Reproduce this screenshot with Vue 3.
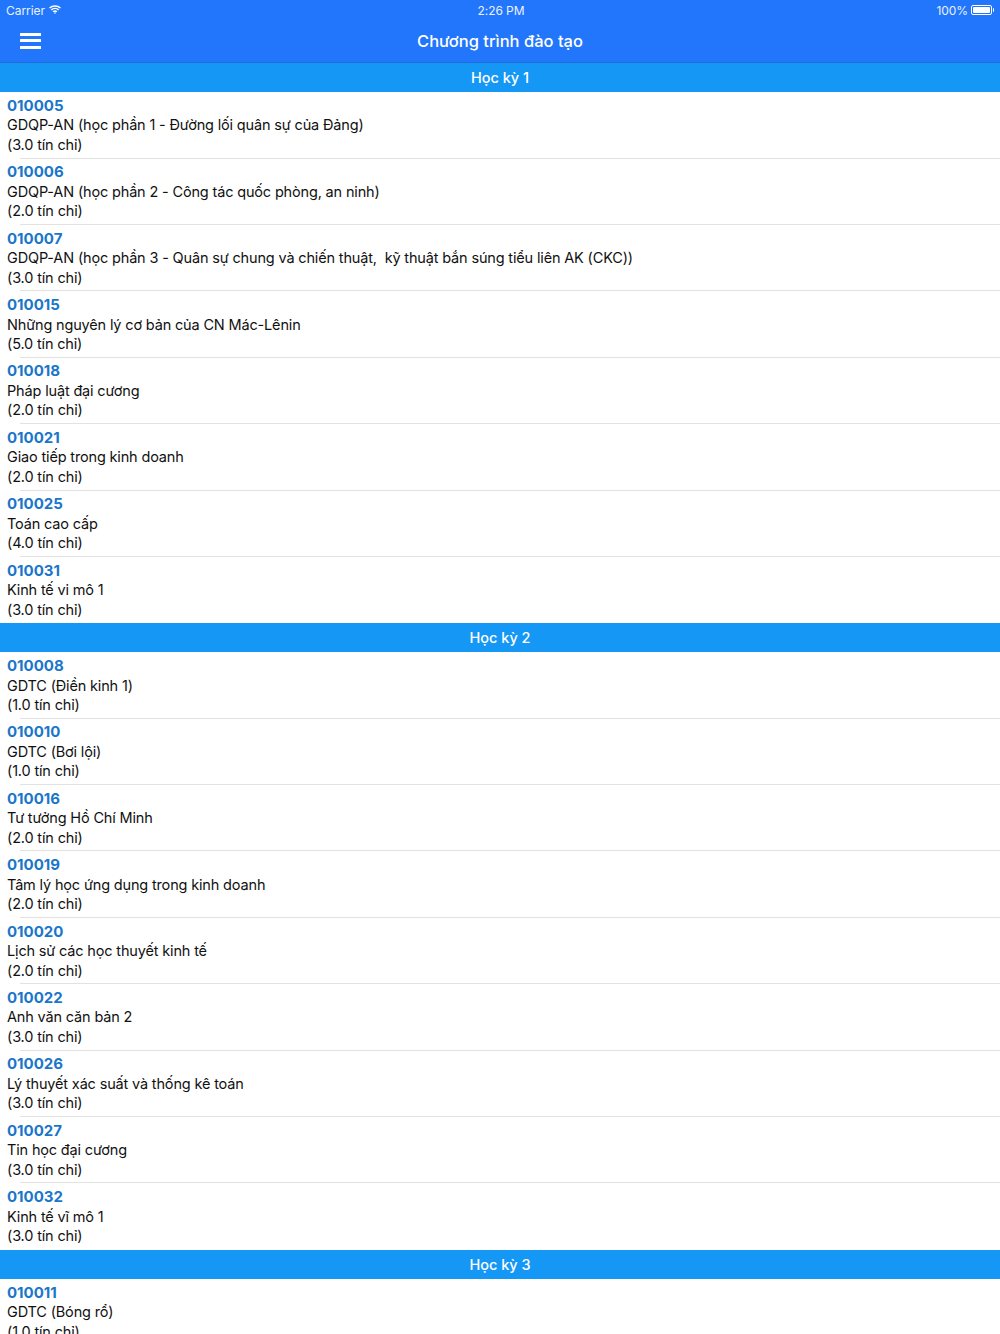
<script setup>
const sections = [
  { title: 'Học kỳ 1', rows: [
    ['010005', 'GDQP-AN (học phần 1 - Đường lối quân sự của Đảng)', '(3.0 tín chỉ)'],
    ['010006', 'GDQP-AN (học phần 2 - Công tác quốc phòng, an ninh)', '(2.0 tín chỉ)'],
    ['010007', 'GDQP-AN (học phần 3 - Quân sự chung và chiến thuật,  kỹ thuật bắn súng tiểu liên AK (CKC))', '(3.0 tín chỉ)'],
    ['010015', 'Những nguyên lý cơ bản của CN Mác-Lênin', '(5.0 tín chỉ)'],
    ['010018', 'Pháp luật đại cương', '(2.0 tín chỉ)'],
    ['010021', 'Giao tiếp trong kinh doanh', '(2.0 tín chỉ)'],
    ['010025', 'Toán cao cấp', '(4.0 tín chỉ)'],
    ['010031', 'Kinh tế vi mô 1', '(3.0 tín chỉ)'],
  ]},
  { title: 'Học kỳ 2', rows: [
    ['010008', 'GDTC (Điền kinh 1)', '(1.0 tín chỉ)'],
    ['010010', 'GDTC (Bơi lội)', '(1.0 tín chỉ)'],
    ['010016', 'Tư tưởng Hồ Chí Minh', '(2.0 tín chỉ)'],
    ['010019', 'Tâm lý học ứng dụng trong kinh doanh', '(2.0 tín chỉ)'],
    ['010020', 'Lịch sử các học thuyết kinh tế', '(2.0 tín chỉ)'],
    ['010022', 'Anh văn căn bản 2', '(3.0 tín chỉ)'],
    ['010026', 'Lý thuyết xác suất và thống kê toán', '(3.0 tín chỉ)'],
    ['010027', 'Tin học đại cương', '(3.0 tín chỉ)'],
    ['010032', 'Kinh tế vĩ mô 1', '(3.0 tín chỉ)'],
  ]},
  { title: 'Học kỳ 3', rows: [
    ['010011', 'GDTC (Bóng rổ)', '(1.0 tín chỉ)'],
  ]},
]
</script>

<template>
  <div class="page">
    <header class="top">
      <div class="status">
        <div class="status-left">
          <span>Carrier</span>
          <svg class="wifi" width="12" height="9" viewBox="0 0 12 9" fill="none" stroke="#fff" stroke-width="1.4">
            <path d="M.5 3C3.6 .3 8.4 .3 11.5 3" />
            <path d="M2.3 4.9C4.4 3.1 7.6 3.1 9.7 4.9" />
            <path d="M4.1 6.7C5.2 5.8 6.8 5.8 7.9 6.7" />
            <path d="M6 9 4.9 7.8C5.5 7.4 6.5 7.4 7.1 7.8Z" fill="#fff" stroke="none" />
          </svg>
        </div>
        <div class="status-time">2:26 PM</div>
        <div class="status-right">
          <span>100%</span>
          <span class="battery"><i class="charge"></i></span>
          <i class="nub"></i>
        </div>
      </div>
      <div class="nav">
        <button class="menu" aria-label="Menu"><i></i><i></i><i></i></button>
        <h1>Chương trình đào tạo</h1>
      </div>
    </header>
    <section v-for="s in sections" :key="s.title">
      <h2>{{ s.title }}</h2>
      <div v-for="r in s.rows" :key="r[0]" class="row">
        <div class="code">{{ r[0] }}</div>
        <div class="name">{{ r[1] }}</div>
        <div class="name">{{ r[2] }}</div>
      </div>
    </section>
  </div>
</template>

<style>
html, body { margin: 0; background: #fff; }
</style>

<style scoped>
.page {
  width: 1000px;
  height: 1334px;
  overflow: hidden;
  background: #fff;
  font-family: Inter, "Liberation Sans", sans-serif;
  color: #111;
}
.top {
  box-sizing: border-box;
  height: 63.2px;
  background: #2176fb;
  color: #fff;
  border-bottom: 1px solid #1f6bd8;
}
.status {
  height: 20px;
  padding: 0 6px;
  display: grid;
  grid-template-columns: 1fr auto 1fr;
  align-items: center;
  font-size: 12px;
  letter-spacing: -0.05px;
  color: #e9f1ff;
}
.status-left { display: flex; align-items: center; gap: 4px; }
.status-right { display: flex; align-items: center; justify-content: flex-end; }
.status-time { transform: translateX(1px); }
.wifi { margin-top: -1px; }
.battery {
  margin-left: 3px;
  width: 21px;
  height: 10px;
  box-sizing: border-box;
  border: 1px solid #fff;
  border-radius: 2px;
  padding: 1px;
  display: block;
}
.charge { display: block; height: 100%; background: #fff; border-radius: 1px; }
.nub { width: 1.5px; height: 4px; background: #fff; margin-left: 0.5px; border-radius: 0 1px 1px 0; display: block; }
.nav {
  position: relative;
  height: 42px;
  display: flex;
  align-items: center;
  justify-content: center;
}
.menu {
  position: absolute;
  left: 20px;
  top: 13px;
  width: 21px;
  height: 15.5px;
  padding: 0;
  border: 0;
  background: none;
  display: flex;
  flex-direction: column;
  justify-content: space-between;
}
.menu i { display: block; height: 3px; border-radius: 0.5px; background: #fff; }
h1 {
  margin: 0;
  font-size: 16.5px;
  font-weight: 500;
  color: #fff;
}
h2 {
  margin: 0;
  height: 29px;
  line-height: 29px;
  background: #1597f6;
  color: #fff;
  text-align: center;
  font-size: 14.5px;
  font-weight: 500;
}
.row {
  box-sizing: border-box;
  height: 66.4px;
  padding: 3.7px 7px 0;
  display: flex;
  flex-direction: column;
}
.row::after {
  content: "";
  display: block;
  flex: none;
  height: 1px;
  margin: auto -7px 0 13px;
  background: #e2e2e2;
}
.row:last-child::after { display: none; }
.code {
  font-size: 15px;
  line-height: 19.5px;
  font-weight: 700;
  color: #1a76c9;
}
.name {
  font-size: 14.5px;
  line-height: 19.5px;
  letter-spacing: -0.16px;
  white-space: pre;
}
</style>
